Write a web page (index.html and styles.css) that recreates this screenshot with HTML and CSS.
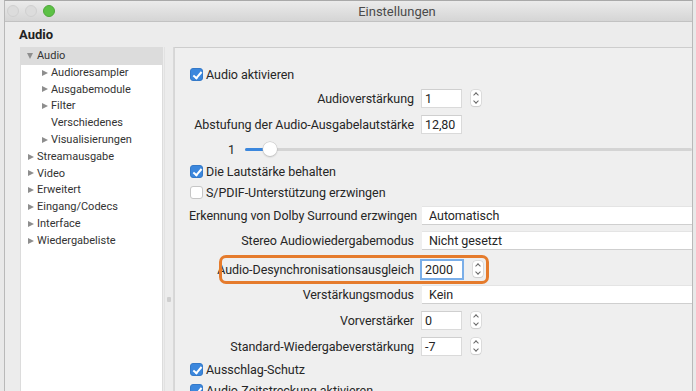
FILE: index.html
```html
<!DOCTYPE html>
<html lang="de">
<head>
    <meta charset="UTF-8">
    <meta name="viewport" content="width=device-width, initial-scale=1.0">
    <title>Einstellungen</title>
    <link rel="stylesheet" href="styles.css">
</head>
<body>

    <div class="window">
        <div class="titlebar">
            <div class="lights">
                <span class="light"></span>
                <span class="light"></span>
                <span class="light green"></span>
            </div>
            <div class="title">Einstellungen</div>
        </div>

        <div class="content">
            <h1 class="section">Audio</h1>

            <div class="split">
                <ul class="tree">
                    <li class="node selected"><span class="arrow down"></span>Audio</li>
                    <li class="node child"><span class="arrow"></span>Audioresampler</li>
                    <li class="node child"><span class="arrow"></span>Ausgabemodule</li>
                    <li class="node child"><span class="arrow"></span>Filter</li>
                    <li class="node child"><span class="arrow none"></span>Verschiedenes</li>
                    <li class="node child"><span class="arrow"></span>Visualisierungen</li>
                    <li class="node"><span class="arrow"></span>Streamausgabe</li>
                    <li class="node"><span class="arrow"></span>Video</li>
                    <li class="node"><span class="arrow"></span>Erweitert</li>
                    <li class="node"><span class="arrow"></span>Eingang/Codecs</li>
                    <li class="node"><span class="arrow"></span>Interface</li>
                    <li class="node"><span class="arrow"></span>Wiedergabeliste</li>
                </ul>

                <div class="splitter"><span class="grip"></span></div>

                <div class="panel">
                    <div class="form">
                        <div class="row check-row">
                            <span class="checkbox checked"></span>Audio aktivieren
                        </div>

                        <div class="row field-row">
                            <label>Audioverstärkung</label>
                            <div class="field">
                                <span class="input">1</span>
                                <span class="spinner"></span>
                            </div>
                        </div>

                        <div class="row field-row">
                            <label>Abstufung der Audio-Ausgabelautstärke</label>
                            <div class="field">
                                <span class="input">12,80</span>
                            </div>
                        </div>

                        <div class="row slider-row">
                            <span class="slider-value">1</span>
                            <div class="track">
                                <div class="track-fill"></div>
                                <span class="knob"></span>
                            </div>
                        </div>

                        <div class="row check-row">
                            <span class="checkbox checked"></span>Die Lautstärke behalten
                        </div>

                        <div class="row check-row">
                            <span class="checkbox"></span>S/PDIF-Unterstützung erzwingen
                        </div>

                        <div class="row combo-row">
                            <label>Erkennung von Dolby Surround erzwingen</label>
                            <div class="combo">Automatisch</div>
                        </div>

                        <div class="row combo-row">
                            <label>Stereo Audiowiedergabemodus</label>
                            <div class="combo">Nicht gesetzt</div>
                        </div>

                        <div class="row field-row marked">
                            <label>Audio-Desynchronisationsausgleich</label>
                            <div class="field">
                                <span class="input focused">2000</span>
                                <span class="spinner"></span>
                            </div>
                            <span class="highlight"></span>
                        </div>

                        <div class="row combo-row">
                            <label>Verstärkungsmodus</label>
                            <div class="combo">Kein</div>
                        </div>

                        <div class="row field-row">
                            <label>Vorverstärker</label>
                            <div class="field">
                                <span class="input">0</span>
                                <span class="spinner"></span>
                            </div>
                        </div>

                        <div class="row field-row">
                            <label>Standard-Wiedergabeverstärkung</label>
                            <div class="field">
                                <span class="input">-7</span>
                                <span class="spinner"></span>
                            </div>
                        </div>

                        <div class="row check-row">
                            <span class="checkbox checked"></span>Ausschlag-Schutz
                        </div>

                        <div class="row check-row">
                            <span class="checkbox checked"></span>Audio-Zeitstreckung aktivieren
                        </div>
                    </div>
                </div>
            </div>
        </div>
    </div>

</body>
</html>
```

FILE: styles.css
```css
* {
    box-sizing: border-box;
    margin: 0;
    padding: 0;
}
body {
    font-family: Roboto, "Noto Sans", sans-serif;
    background-color: #e9e9e9;
    color: #262626;
    width: 696px;
    height: 391px;
    overflow: hidden;
}
.window {
    margin-left: 4px;
    width: 689px;
    height: 391px;
    border-left: 1px solid #b9b9b9;
    border-right: 1px solid #b9b9b9;
    border-top: 1px solid #a9a9a9;
    background-color: #ececec;
    display: flex;
    flex-direction: column;
}
.titlebar {
    height: 21px;
    flex-shrink: 0;
    background: linear-gradient(#ebebeb, #d5d5d5);
    border-bottom: 1px solid #c2c2c2;
    display: flex;
    align-items: center;
    position: relative;
    overflow: hidden;
}
.lights {
    display: flex;
    gap: 6px;
    padding-left: 2px;
}
.light {
    width: 12px;
    height: 12px;
    border-radius: 50%;
    background-color: #dcdcdc;
    border: 1px solid #d0d0d0;
}
.light.green {
    background-color: #5cc145;
    border-color: #4fa83b;
}
.title {
    position: absolute;
    left: 0;
    width: 784px;
    text-align: center;
    font-size: 13px;
    color: #4a4a4a;
}
.content {
    flex: 1;
    display: flex;
    flex-direction: column;
    min-height: 0;
}
.section {
    font-size: 13px;
    font-weight: 700;
    color: #222;
    line-height: 16px;
    margin: 5px 0 4px 14px;
}
.split {
    flex: 1;
    display: flex;
    min-height: 0;
}

/* arvore lateral */
.tree {
    list-style: none;
    margin-left: 15px;
    width: 143px;
    background-color: #fff;
    border: 1px solid #dcdcdc;
    border-bottom: none;
    font-size: 11px;
    color: #333;
}
.node {
    height: 16.8px;
    line-height: 16.8px;
    display: flex;
    align-items: center;
    padding-left: 6px;
}
.node.child {
    padding-left: 20px;
}
.node.selected {
    background-color: #dcdcdc;
}
.arrow {
    width: 9px;
    height: 8px;
    flex-shrink: 0;
    margin-right: 1px;
    position: relative;
}
.arrow::before {
    content: "";
    position: absolute;
    left: 1px;
    top: 0.5px;
    border-left: 6px solid #8e8e8e;
    border-top: 3.5px solid transparent;
    border-bottom: 3.5px solid transparent;
}
.arrow.down::before {
    left: 0;
    top: 1px;
    border-top: 6px solid #8e8e8e;
    border-left: 3.5px solid transparent;
    border-right: 3.5px solid transparent;
    border-bottom: none;
}
.arrow.none::before {
    display: none;
}
.splitter {
    width: 10px;
    position: relative;
    border-left: 1px solid #e2e2e2;
    border-right: 1px solid #d8d8d8;
    margin-left: 1px;
}
.grip {
    position: absolute;
    left: 2px;
    top: 250px;
    width: 4px;
    height: 5px;
    background-color: #cfcfcf;
    border-radius: 1px;
}

/* painel do formulario */
.panel {
    flex: 1;
    background-color: #efefef;
    border-top: 1px solid #cdcdcd;
    border-left: 1px solid #d6d6d6;
    overflow: hidden;
}
.form {
    padding: 16px 0 0 14px;
    font-size: 12.5px;
    letter-spacing: -0.05px;
}
.row {
    display: flex;
    align-items: center;
    position: relative;
}
.check-row {
    height: 21px;
    padding-left: 1px;
}
.checkbox {
    width: 13px;
    height: 13px;
    border-radius: 3px;
    background-color: #fff;
    border: 1px solid #c6c6c6;
    margin-right: 3px;
    position: relative;
}
.checkbox.checked {
    background-color: #3b87dd;
    border-color: #3479c8;
}
.checkbox.checked::after {
    content: "";
    position: absolute;
    left: 3.5px;
    top: 0.5px;
    width: 3px;
    height: 7px;
    border-right: 2px solid #fff;
    border-bottom: 2px solid #fff;
    transform: rotate(40deg);
}
.row label {
    width: 225px;
    text-align: right;
    flex-shrink: 0;
    margin-right: 7px;
    white-space: nowrap;
}
.field-row {
    height: 26px;
}
.combo-row {
    height: 25px;
}
.field {
    display: flex;
    align-items: center;
}
.input {
    width: 41px;
    height: 19px;
    background-color: #fff;
    border: 1px solid #dadada;
    border-top-color: #cfcfcf;
    padding-left: 3px;
    line-height: 17px;
}
.input.focused {
    width: 44px;
    height: 21px;
    margin-left: -1px;
    border: 2px solid #7aaee8;
    padding-left: 3px;
    line-height: 17px;
}
.spinner {
    width: 10px;
    height: 16px;
    margin-left: 9px;
    background-color: #fff;
    border-radius: 3px;
    box-shadow: 0 0 0 0.5px #cacaca, 0 1px 1px rgba(0, 0, 0, 0.12);
    position: relative;
}
.spinner::before,
.spinner::after {
    content: "";
    position: absolute;
    left: 3px;
    width: 3px;
    height: 3px;
    border-left: 1px solid #666;
    border-top: 1px solid #666;
}
.spinner::before {
    top: 3px;
    transform: rotate(45deg);
}
.spinner::after {
    bottom: 3px;
    transform: rotate(225deg);
}
.combo {
    flex: 1;
    height: 19px;
    background-color: #fff;
    border-top: 1px solid #e4e4e4;
    border-bottom: 1px solid #cfcfcf;
    padding-left: 7px;
    line-height: 17px;
    margin-left: 1px;
}
.marked {
    margin-top: 3px;
}
.highlight {
    position: absolute;
    left: 30px;
    top: -1px;
    width: 270px;
    height: 29px;
    border: 3px solid #e57b2c;
    border-radius: 7px;
    pointer-events: none;
}
.slider-row {
    height: 24px;
    padding-left: 39px;
}
.slider-value {
    width: 17px;
}
.track {
    flex: 1;
    height: 3px;
    background-color: #d4d4d4;
    border-radius: 2px;
    position: relative;
}
.track-fill {
    width: 25px;
    height: 3px;
    background-color: #3b87dd;
    border-radius: 2px;
}
.knob {
    position: absolute;
    left: 18px;
    top: -6px;
    width: 14px;
    height: 14px;
    border-radius: 50%;
    background-color: #fff;
    box-shadow: 0 0 0 0.5px #c4c4c4, 0 1px 2px rgba(0, 0, 0, 0.2);
}
```
